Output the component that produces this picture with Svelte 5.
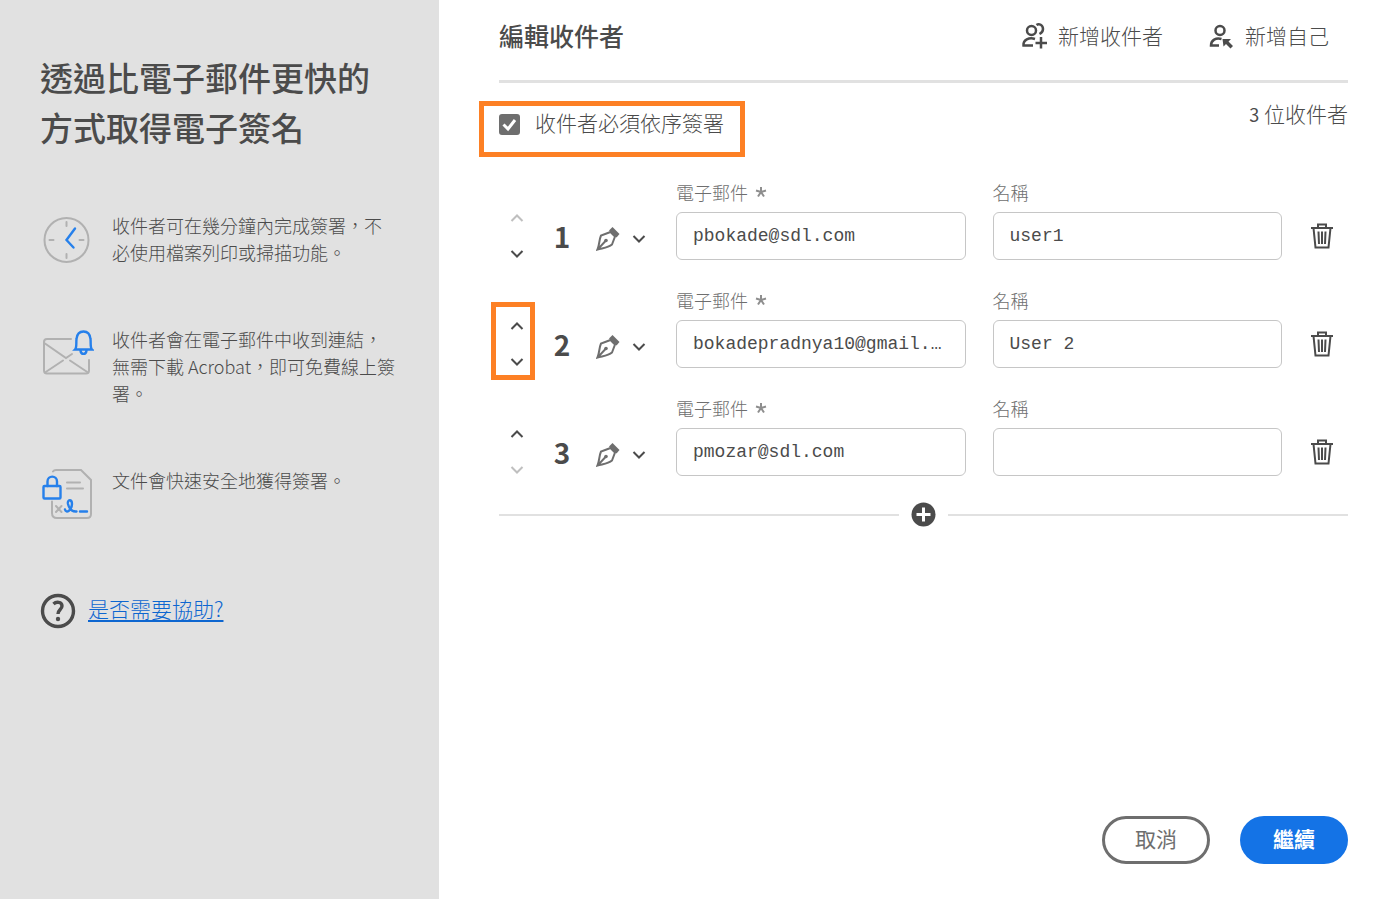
<script lang="ts">
  interface Recipient {
    id: number;
    email: string;
    name: string;
    marked?: boolean;
  }

  let ordered = $state(true);

  let recipients = $state<Recipient[]>([
    { id: 1, email: 'pbokade@sdl.com', name: 'user1' },
    { id: 2, email: 'bokadepradnya10@gmail.com', name: 'User 2', marked: true },
    { id: 3, email: 'pmozar@sdl.com', name: '' }
  ]);

  let nextId = 4;

  function move(index: number, delta: number) {
    const [item] = recipients.splice(index, 1);
    recipients.splice(index + delta, 0, item);
  }

  function add() {
    recipients.push({ id: nextId++, email: '', name: '' });
  }

  function remove(index: number) {
    recipients.splice(index, 1);
  }
</script>

{#snippet chevron(up: boolean)}
  <svg class="chevron" viewBox="0 0 14 10" aria-hidden="true">
    <path d={up ? 'M1.500 8 L7 2.500 L12.500 8' : 'M1.500 2 L7 7.500 L12.500 2'} />
  </svg>
{/snippet}

<div class="page" lang="zh-Hant">
  <aside class="sidebar">
    <h1>透過比電子郵件更快的方式取得電子簽名</h1>

    <ul class="features">
      <li>
        <svg class="feature-icon" viewBox="0 -1 54 54" aria-hidden="true">
          <g class="gray">
            <circle cx="26.500" cy="27" r="22" />
            <path d="M26.500 9v4M26.500 41v4M9.500 27h4M39.500 27h4" />
          </g>
          <path class="blue" d="M35 15.500L26.500 27L33.500 34.500" />
        </svg>
        <p>收件者可在幾分鐘內完成簽署，不必使用檔案列印或掃描功能。</p>
      </li>
      <li>
        <svg class="feature-icon" viewBox="0 -1 54 54" aria-hidden="true">
          <g class="gray">
            <path d="M31 12H7Q4 12 4 15V43.500Q4 46.500 7 46.500H46Q49 46.500 49 43.500V33" />
            <path d="M5 16.500L26 31L32 27M5 45.500L23 33.500M48 45.500L30 33.500" />
          </g>
          <g class="blue">
            <path d="M35 22.500C37 20.500 36 16 36.500 12C37 7 40 4.500 43.500 4.500C47 4.500 50 7 50.500 12C51 16 50 20.500 52 22.500Z" />
            <path d="M40.500 23.500C41 28 46 28 46.500 23.500" />
          </g>
        </svg>
        <p>收件者會在電子郵件中收到連結，無需下載 Acrobat，即可免費線上簽署。</p>
      </li>
      <li>
        <svg class="feature-icon" viewBox="0 0 54 54" aria-hidden="true">
          <g class="gray">
            <path d="M13 4.500Q14 3 16 3H41L51 13V47Q51 51 47 51H17Q12 51 12 46V34.500" />
            <path d="M27 15.500H40M27 21.500H43M16 39L21.500 45M21.500 39L16 45" />
          </g>
          <g class="blue">
            <rect x="3.500" y="19" width="17" height="12.500" rx="1" />
            <path d="M7.500 19V14.500C7.500 8 17 8 17 14.500V19" />
            <path d="M25 42.500C26 47 32 43 32 37C32 32 27 32 28 37C29 41 31 45 36.500 44.500M40 44.500H47" />
          </g>
        </svg>
        <p>文件會快速安全地獲得簽署。</p>
      </li>
    </ul>

    <div class="help">
      <svg viewBox="0 0 36 36" aria-hidden="true">
        <circle cx="18" cy="18" r="15.500" />
        <path d="M13.500 11C16 8.500 22 8.500 22 13C22 16.500 18 16.500 18 21" />
        <circle class="dot" cx="18" cy="26" r="2.200" />
      </svg>
      <a href="#help">是否需要協助?</a>
    </div>
  </aside>

  <main>
    <header>
      <h2>編輯收件者</h2>
      <div class="actions">
        <button type="button" class="action" onclick={add}>
          <svg viewBox="-1 -1 28 28" aria-hidden="true">
            <circle cx="10.500" cy="8.500" r="4.500" />
            <path d="M15.500 3C18 1 22 3 22 7C22 9.500 20.500 11 18.500 12" />
            <path d="M14 17C8 15 2 18 2.500 23.500H12M20 15V26.500M14.500 21H26" />
          </svg>
          新增收件者
        </button>
        <button type="button" class="action" onclick={add}>
          <svg viewBox="-1 -1 28 28" aria-hidden="true">
            <circle cx="12" cy="8.500" r="4.500" />
            <path d="M13.500 17C8 15.500 3 18 3 23.500H11" />
            <path class="solid" d="M14.500 17H23L20.500 19.500L25 24L22.500 26.500L18 22L15.500 24.500Z" />
          </svg>
          新增自己
        </button>
      </div>
    </header>

    <div class="options">
      <label class="check">
        <input type="checkbox" bind:checked={ordered} />
        <span class="box">
          <svg viewBox="0 0 17 17" aria-hidden="true"><path d="M2.500 8.500L7 13L14 4" /></svg>
        </span>
        收件者必須依序簽署
        <span class="mark"></span>
      </label>
      <span class="count"><span class="total">{recipients.length}</span> 位收件者</span>
    </div>

    <ol class="recipients">
      {#each recipients as recipient, i (recipient.id)}
        <li>
          <div class="order">
            <button type="button" aria-label="上移" disabled={i === 0} onclick={() => move(i, -1)}>
              {@render chevron(true)}
            </button>
            <button
              type="button"
              aria-label="下移"
              disabled={i === recipients.length - 1}
              onclick={() => move(i, 1)}
            >
              {@render chevron(false)}
            </button>
            {#if recipient.marked}
              <span class="mark"></span>
            {/if}
          </div>

          <span class="number">{i + 1}</span>

          <button type="button" class="role" aria-label="簽署者角色">
            <svg class="pen" viewBox="0 0 24 24" aria-hidden="true">
              <path d="M1.500 22.500C3.500 18 3 13 5 8.500L14.500 5L19 9.500L16 17.500C12 21 6.500 21 1.500 22.500L9.500 14" />
              <circle class="solid" cx="10" cy="13.500" r="1.800" />
              <path class="solid" d="M13 3.500L16.500 0L23.500 7L20.500 10.500Z" />
            </svg>
            {@render chevron(false)}
          </button>

          <div class="field">
            <label for="email-{recipient.id}">
              電子郵件
              <svg viewBox="0 0 12 12" aria-hidden="true">
                <path d="M6 6V1M6 6L11 4.500M6 6L9 10.500M6 6L3 10.500M6 6L1 4.500" />
              </svg>
            </label>
            <input id="email-{recipient.id}" type="text" required bind:value={recipient.email} />
          </div>

          <div class="field">
            <label for="name-{recipient.id}">名稱</label>
            <input id="name-{recipient.id}" type="text" bind:value={recipient.name} />
          </div>

          <button type="button" class="trash" aria-label="刪除" onclick={() => remove(i)}>
            <svg viewBox="0 0 24 26" aria-hidden="true">
              <path d="M1 5H23M8 5V1.500H16V5M3.500 5L5.500 24.500H18.500L20.500 5" />
              <path d="M8.500 8.500L9 21M12 8.500V21M15.500 8.500L15 21" />
            </svg>
          </button>
        </li>
      {/each}
    </ol>

    <div class="add-line">
      <button type="button" aria-label="新增收件者" onclick={add}>
        <svg viewBox="0 0 25 25" aria-hidden="true">
          <circle cx="12.500" cy="12.500" r="12" />
          <path d="M12.500 5.500V19.500M5.500 12.500H19.500" />
        </svg>
      </button>
    </div>

    <footer>
      <button type="button" class="cancel">取消</button>
      <button type="button" class="continue">繼續</button>
    </footer>
  </main>
</div>

<style>
  :global(body) {
    margin: 0;
  }

  .page {
    display: flex;
    min-height: 100vh;
    background: #fff;
    color: #4b4b4b;
    font-family: 'Noto Sans CJK TC', sans-serif;
    font-size: 21px;
    font-weight: 300;
    line-height: 30px;
  }

  h1,
  h2,
  p,
  ul,
  ol {
    margin: 0;
    padding: 0;
    list-style: none;
  }

  button {
    padding: 0;
    border: 0;
    background: none;
    color: inherit;
    font: inherit;
    cursor: pointer;
  }

  button:disabled {
    opacity: 0.35;
    cursor: default;
  }

  svg {
    display: block;
    flex: none;
    fill: none;
    stroke: #4b4b4b;
    stroke-width: 2;
  }

  .solid {
    fill: currentColor;
    stroke: none;
  }

  .mark {
    position: absolute;
    border: 5px solid #fd8024;
    pointer-events: none;
  }

  /* Sidebar */
  .sidebar {
    box-sizing: border-box;
    flex: 0 0 auto;
    width: 439px;
    padding: 52px 40px 32px;
    background: #e1e1e1;
  }

  h1 {
    font-size: 33px;
    font-weight: 500;
    line-height: 50px;
  }

  .features {
    display: flex;
    flex-direction: column;
    gap: 60px;
    margin-top: 60px;
  }

  .features li {
    display: flex;
    gap: 18px;
    font-size: 18px;
    line-height: 27px;
  }

  .feature-icon {
    width: 54px;
    height: 54px;
    stroke-linecap: round;
  }

  .gray {
    stroke: #b1b1b1;
  }

  .blue {
    stroke: #2680eb;
    stroke-width: 2.4;
  }

  .help {
    display: flex;
    align-items: flex-start;
    gap: 12px;
    margin-top: 72px;
  }

  .help svg {
    width: 36px;
    height: 36px;
    stroke-width: 3.4;
  }

  .dot {
    fill: #4b4b4b;
    stroke: none;
  }

  .help a {
    color: #0d66d0;
    text-decoration-thickness: 2px;
    text-underline-offset: 3px;
  }

  /* Recipients panel */
  main {
    display: flex;
    flex: 1;
    flex-direction: column;
    min-width: 0;
    padding: 0 48px 35px 60px;
  }

  header {
    display: flex;
    align-items: center;
    justify-content: space-between;
    padding: 20px 19px 30px 0;
    border-bottom: 3px solid #e1e1e1;
  }

  h2 {
    font-size: 25px;
    font-weight: 500;
    line-height: 30px;
  }

  .actions {
    display: flex;
    gap: 44px;
  }

  .action {
    display: flex;
    align-items: center;
    gap: 10px;
  }

  .action svg {
    width: 28px;
    height: 28px;
    stroke-width: 2.5;
  }

  .options {
    display: flex;
    align-items: flex-start;
    justify-content: space-between;
    padding: 15px 0 37px;
  }

  .check {
    position: relative;
    display: flex;
    align-items: flex-start;
    gap: 15px;
    margin-top: 11px;
    line-height: 26px;
  }

  .check input {
    position: absolute;
    width: 21px;
    height: 21px;
    margin: 5px 0 0;
    opacity: 0;
  }

  .check .mark {
    inset: -8px -21px -22px -20px;
  }

  .box {
    box-sizing: border-box;
    width: 21px;
    height: 21px;
    margin-top: 5px;
    border: 2px solid #6e6e6e;
    border-radius: 3px;
  }

  .box svg {
    display: none;
    stroke: #fff;
    stroke-width: 3;
  }

  input:checked + .box {
    background: #6e6e6e;
  }

  input:checked + .box svg {
    display: block;
  }

  .total {
    font-size: 18px;
    font-weight: 400;
  }

  .recipients {
    display: flex;
    flex-direction: column;
    gap: 20px;
  }

  .recipients li {
    display: grid;
    grid-template-columns: 36px 54px 60px 1fr 1fr 66px;
    align-items: end;
  }

  .order {
    position: relative;
    display: flex;
    flex-direction: column;
    justify-content: space-between;
    height: 48px;
  }

  .order button {
    display: flex;
    justify-content: center;
    padding: 1px 0;
  }

  .order .mark {
    inset: -18px 0 -12px -8px;
  }

  .chevron {
    width: 14px;
    height: 10px;
  }

  .number {
    font-size: 28px;
    font-weight: 700;
    line-height: 48px;
    text-align: center;
  }

  .role {
    display: flex;
    align-items: center;
    gap: 12px;
    height: 48px;
    margin-left: 7px;
    padding-top: 6px;
    box-sizing: border-box;
    color: #6e6e6e;
  }

  .pen {
    width: 24px;
    height: 24px;
    stroke: #6e6e6e;
  }

  .field {
    min-width: 0;
    margin-left: 27px;
  }

  .field label {
    display: flex;
    align-items: center;
    gap: 7px;
    color: #6e6e6e;
    font-size: 18px;
    line-height: 40px;
  }

  .field label svg {
    width: 12px;
    height: 12px;
    stroke: #8e8e8e;
  }

  .field input {
    box-sizing: border-box;
    display: block;
    width: 100%;
    height: 48px;
    padding: 0 16px;
    border: 1px solid #c6c6c6;
    border-radius: 6px;
    background: #fff;
    color: #4b4b4b;
    font-family: 'Liberation Mono', monospace;
    font-size: 18px;
    text-overflow: ellipsis;
  }

  .field input:focus {
    outline: none;
    border-color: #2680eb;
  }

  .trash {
    display: flex;
    align-items: center;
    height: 48px;
    margin-left: 28px;
  }

  .trash svg {
    width: 24px;
    height: 26px;
  }

  .add-line {
    display: flex;
    align-items: center;
    gap: 12px;
    margin-top: 26px;
  }

  .add-line::before,
  .add-line::after {
    content: '';
    flex: 1;
    height: 2px;
    background: #e1e1e1;
  }

  .add-line svg {
    width: 25px;
    height: 25px;
  }

  .add-line circle {
    fill: #4b4b4b;
    stroke: none;
  }

  .add-line path {
    stroke: #fff;
    stroke-width: 3;
  }

  footer {
    display: flex;
    justify-content: flex-end;
    gap: 30px;
    margin-top: auto;
  }

  footer button {
    box-sizing: border-box;
    min-width: 108px;
    height: 48px;
    padding: 0 30px 4px;
    border-radius: 24px;
  }

  .cancel {
    border: 3px solid #6e6e6e;
    color: #6e6e6e;
    font-weight: 400;
  }

  .continue {
    background: #1473e6;
    color: #fff;
    font-weight: 700;
  }
</style>
